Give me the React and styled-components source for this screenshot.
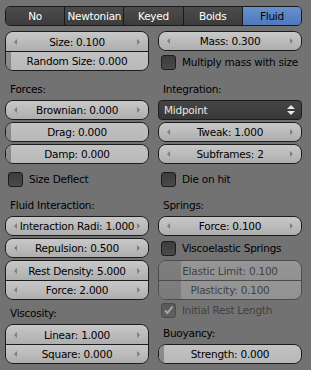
import styled, { createGlobalStyle } from 'styled-components';

const GlobalStyle = createGlobalStyle`
  html, body {
    margin: 0;
    padding: 0;
    background: #727272;
  }
  body {
    font-family: "DejaVu Sans", "Liberation Sans", sans-serif;
    font-size: 10.5px;
    letter-spacing: -0.25px;
    color: #000;
  }
`;

const Panel = styled.div`
  width: 311px;
  height: 370px;
  box-sizing: border-box;
  padding: 6px 9px 0 5px;
  background: #727272;
  overflow: hidden;
`;

const Tabs = styled.div`
  display: flex;
  height: 20px;
  border: 1px solid #191919;
  border-radius: 5px;
  overflow: hidden;
  box-sizing: border-box;
`;

const Tab = styled.div`
  flex: 1;
  display: flex;
  align-items: center;
  justify-content: center;
  color: ${p => (p.$active ? '#000' : '#fff')};
  background: ${p =>
    p.$active
      ? 'linear-gradient(#6690d0, #4f78ba)'
      : 'linear-gradient(#4c4c4c, #3c3c3c)'};
  border-left: ${p => (p.$first ? 'none' : '1px solid #191919')};
`;

const Columns = styled.div`
  display: grid;
  grid-template-columns: 144px 144px;
  column-gap: 9px;
  margin-top: ${p => p.$top || 0}px;
`;

const Column = styled.div`
  display: flex;
  flex-direction: column;
`;

const Label = styled.div`
  height: 20px;
  line-height: 20px;
  padding-left: 5px;
  margin-top: ${p => p.$top || 0}px;
  margin-bottom: 1px;
`;

const Group = styled.div`
  display: flex;
  flex-direction: column;
  border: 1px solid #1c1c1c;
  border-radius: 8px;
  overflow: hidden;
  margin-top: ${p => p.$top || 0}px;
  opacity: ${p => (p.$disabled ? 0.45 : 1)};
`;

const Field = styled.div`
  position: relative;
  height: ${p => p.$h || 18}px;
  display: flex;
  align-items: center;
  justify-content: center;
  background: ${p =>
    p.$slider
      ? 'linear-gradient(#c2c2c2, #b8b8b8)'
      : 'linear-gradient(#c8c8c8, #aeaeae)'};
  border-top: ${p => (p.$divider ? '1px solid #1c1c1c' : 'none')};
  white-space: nowrap;
`;

const Fill = styled.div`
  position: absolute;
  left: 0;
  top: 0;
  bottom: 0;
  background: linear-gradient(#8e8e8e, #868686);
`;

const FieldText = styled.span`
  position: relative;
`;

const Arrow = styled.span`
  position: absolute;
  top: 50%;
  margin-top: -3px;
  width: 0;
  height: 0;
  border-top: 3px solid transparent;
  border-bottom: 3px solid transparent;
  ${p =>
    p.$right
      ? 'right: 8px; border-left: 3px solid #7e7e7e;'
      : 'left: 8px; border-right: 3px solid #7e7e7e;'}
`;

const Dropdown = styled.div`
  height: 20px;
  box-sizing: border-box;
  border: 1px solid #1c1c1c;
  border-radius: 4px;
  background: linear-gradient(#454545, #383838);
  color: #e6e6e6;
  display: flex;
  align-items: center;
  justify-content: space-between;
  padding: 0 6px 0 5px;
`;

const CheckRow = styled.div`
  height: 20px;
  display: flex;
  align-items: center;
  gap: 6px;
  padding-left: 3px;
  white-space: nowrap;
  margin-top: ${p => p.$top || 0}px;
  opacity: ${p => (p.$disabled ? 0.45 : 1)};
`;

const Box = styled.div`
  flex: none;
  width: 13px;
  height: 13px;
  border: 1px solid #1c1c1c;
  border-radius: 3px;
  background: linear-gradient(#3c3c3c, #4a4a4a);
  display: flex;
  align-items: center;
  justify-content: center;
`;

const Num = ({ label, top, slider, fill = 5 }) => (
  <Group $top={top}>
    <Field $h={18} $slider={slider}>
      {slider && <Fill style={{ width: fill }} />}
      {!slider && <Arrow />}
      <FieldText>{label}</FieldText>
      {!slider && <Arrow $right />}
    </Field>
  </Group>
);

const Joined = ({ items, top, disabled }) => (
  <Group $top={top} $disabled={disabled}>
    {items.map((it, i) => (
      <Field key={it.label} $h={i === 0 ? 19 : 18} $divider={i > 0} $slider={it.slider}>
        {it.slider && <Fill style={{ width: it.fill }} />}
        {!it.slider && <Arrow />}
        <FieldText>{it.label}</FieldText>
        {!it.slider && <Arrow $right />}
      </Field>
    ))}
  </Group>
);

const Check = ({ label, checked, top, disabled }) => (
  <CheckRow $top={top} $disabled={disabled}>
    <Box>
      {checked && (
        <svg width="11" height="11" viewBox="0 0 11 11">
          <path d="M2 5.5 L4.5 8 L9.5 1.5" stroke="#e8e8e8" strokeWidth="2" fill="none" />
        </svg>
      )}
    </Box>
    <span>{label}</span>
  </CheckRow>
);

const UpDown = () => (
  <svg width="8" height="12" viewBox="0 0 8 12">
    <path d="M0 5 L4 1 L8 5 Z" fill="#e6e6e6" />
    <path d="M0 7 L4 11 L8 7 Z" fill="#e6e6e6" />
  </svg>
);

export default function App() {
  const types = ['No', 'Newtonian', 'Keyed', 'Boids', 'Fluid'];
  return (
    <Panel>
      <GlobalStyle />
      <Tabs>
        {types.map((t, i) => (
          <Tab key={t} $first={i === 0} $active={t === 'Fluid'}>
            {t}
          </Tab>
        ))}
      </Tabs>

      <Columns $top={5}>
        <Column>
          <Joined
            items={[
              { label: 'Size: 0.100' },
              { label: 'Random Size: 0.000', slider: true, fill: 5 },
            ]}
          />
        </Column>
        <Column>
          <Num label="Mass: 0.300" />
          <Check label="Multiply mass with size" top={1} />
        </Column>
      </Columns>

      <Columns $top={7}>
        <Column>
          <Label>Forces:</Label>
          <Num label="Brownian: 0.000" />
          <Num label="Drag: 0.000" slider top={2} />
          <Num label="Damp: 0.000" slider top={2} />
          <Check label="Size Deflect" top={5} />
        </Column>
        <Column>
          <Label>Integration:</Label>
          <Dropdown>
            <span>Midpoint</span>
            <UpDown />
          </Dropdown>
          <Num label="Tweak: 1.000" top={2} />
          <Num label="Subframes: 2" top={2} />
          <Check label="Die on hit" top={5} />
        </Column>
      </Columns>

      <Columns $top={6}>
        <Column>
          <Label>Fluid Interaction:</Label>
          <Num label="Interaction Radi: 1.000" />
          <Num label="Repulsion: 0.500" top={2} />
          <Joined
            top={2}
            items={[{ label: 'Rest Density: 5.000' }, { label: 'Force: 2.000' }]}
          />
          <Label $top={3}>Viscosity:</Label>
          <Joined items={[{ label: 'Linear: 1.000' }, { label: 'Square: 0.000' }]} />
        </Column>
        <Column>
          <Label>Springs:</Label>
          <Num label="Force: 0.100" />
          <Check label="Viscoelastic Springs" top={2} />
          <Joined
            top={2}
            disabled
            items={[
              { label: 'Elastic Limit: 0.100', slider: true, fill: 22 },
              { label: 'Plasticity: 0.100', slider: true, fill: 22 },
            ]}
          />
          <Check label="Initial Rest Length" checked disabled />
          <Label $top={3}>Buoyancy:</Label>
          <Num label="Strength: 0.000" slider />
        </Column>
      </Columns>
    </Panel>
  );
}
